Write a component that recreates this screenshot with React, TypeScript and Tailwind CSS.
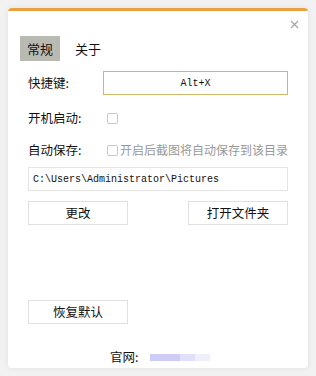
const cjk = { fontFamily: '"Noto Sans CJK SC", "Noto Sans", sans-serif' };

export default function App() {
  return (
    <div className="h-[376px] w-[316px] bg-[#f2f2f2] p-[8px] text-[12px] text-[#111]" style={cjk}>
      <div className="relative flex h-[360px] flex-col overflow-hidden rounded-[4px] bg-white shadow-[0_0_6px_rgba(0,0,0,0.08)]">
        <div className="h-[3px] bg-[#e9a03f]" />
        <button className="absolute right-[8px] top-[10px] flex h-[12px] w-[12px] items-center justify-center text-[#aaa]">
          <svg width="9" height="9" viewBox="0 0 9 9">
            <path d="M1 1L8 8M8 1L1 8" stroke="#a8a8a8" strokeWidth="1.3" />
          </svg>
        </button>

        <div className="mt-[25px] flex items-center gap-[8px] px-[12px]">
          <div className="flex h-[25px] w-[40px] items-center justify-center bg-[#b9bbb3] text-[13px]">常规</div>
          <div className="flex h-[25px] w-[40px] items-center justify-center text-[13px]">关于</div>
        </div>

        <div className="mt-[10px] flex flex-col px-[20px]">
          <div className="flex h-[24px] items-center">
            <span className="w-[75px] text-[12.5px]">快捷键:</span>
            <div
              className="flex h-[24px] flex-1 items-center justify-center border border-[#d2b767] text-[10px]"
              style={{ fontFamily: '"Liberation Mono", monospace' }}
            >
              Alt+X
            </div>
          </div>

          <div className="mt-[13px] flex h-[20px] items-center">
            <span className="w-[79px] text-[12.5px]">开机启动:</span>
            <span className="h-[11px] w-[11px] rounded-[2px] border border-[#c8c8c8]" />
          </div>

          <div className="mt-[12px] flex h-[20px] items-center">
            <span className="w-[79px] text-[12.5px]">自动保存:</span>
            <span className="h-[11px] w-[11px] rounded-[2px] border border-[#c8c8c8]" />
            <span className="ml-[2px] whitespace-nowrap text-[#999]">开启后截图将自动保存到该目录</span>
          </div>

          <div
            className="mt-[7px] flex h-[24px] items-center border border-[#e4e4e4] px-[4px] text-[10px]"
            style={{ fontFamily: '"Liberation Mono", monospace' }}
          >
            C:\Users\Administrator\Pictures
          </div>

          <div className="mt-[10px] flex justify-between">
            <button className="h-[24px] w-[100px] border border-[#e0e0e0] bg-white text-[12.5px]">更改</button>
            <button className="h-[24px] w-[100px] border border-[#e0e0e0] bg-white text-[12.5px]">打开文件夹</button>
          </div>

          <div className="mt-[75px]">
            <button className="h-[24px] w-[100px] border border-[#e0e0e0] bg-white text-[12.5px]">恢复默认</button>
          </div>
        </div>

        <div className="mt-[24px] flex items-center pl-[102px]">
          <span className="text-[12.5px]">官网:</span>
          <span className="ml-[12px] flex h-[7px] w-[60px]">
            <span className="w-[30px] bg-[#cdcdf8]" />
            <span className="w-[15px] bg-[#e0e0fa]" />
            <span className="w-[15px] bg-[#efeffc]" />
          </span>
        </div>
      </div>
    </div>
  );
}
